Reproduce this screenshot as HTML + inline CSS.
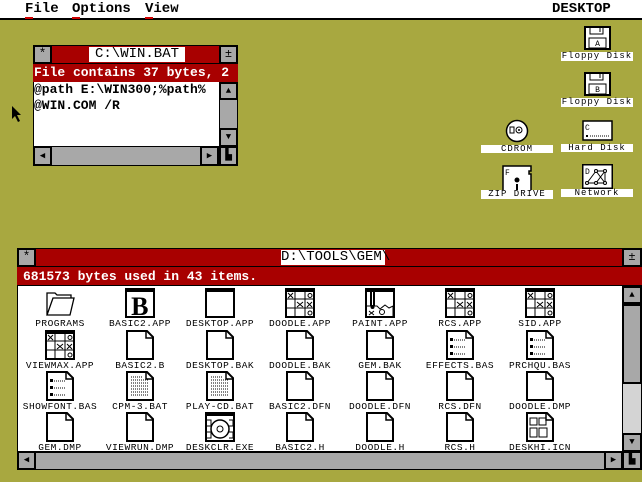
<!DOCTYPE html>
<html><head><meta charset="utf-8"><style>
*{margin:0;padding:0;box-sizing:border-box}
body{width:642px;height:482px;overflow:hidden;position:relative;font-family:"Liberation Mono",monospace;background:#a8a840}
.a{position:absolute}
.menu{left:0;top:0;width:642px;height:20px;background:#fff;border-bottom:2px solid #000;font-size:14px;font-weight:bold;line-height:19px}
.menu span{position:absolute;top:0}
.menu u{text-decoration:none;border-bottom:2px solid #c00}
.gbox{background:#a8a8a8;border:2px solid #000;}
.red{background:#a80000}
.white{background:#fff}
.lbl{background:#fff;font-size:9px;letter-spacing:1px;text-align:center;line-height:9px;color:#000}
.ic{position:absolute;width:80px;text-align:center;font-size:9.5px;letter-spacing:.5px;line-height:10px}
.ic svg{display:block;margin:0 auto 1px}
</style></head><body>
<svg width="0" height="0" style="position:absolute">
<defs>
<symbol id="doc" viewBox="0 0 30 30"><path d="M2 1H22L28 7V29H2Z" fill="#fff" stroke="#000" stroke-width="2"/><path d="M21 1V8H28" fill="none" stroke="#000" stroke-width="1.5"/></symbol>
<symbol id="ldoc" viewBox="0 0 30 30"><use href="#doc"/><g fill="#000"><rect x="5" y="8" width="3" height="3"/><rect x="5" y="15" width="3" height="3"/><rect x="5" y="22" width="3" height="3"/></g><path d="M9 10H20M9 17H20M9 24H20" stroke="#000" stroke-dasharray="1 1"/></symbol>
<symbol id="tdoc" viewBox="0 0 30 30"><use href="#doc"/><path d="M6 6H17M6 9H24M6 12H24M6 15H24M6 18H24M6 21H24M6 24H24" stroke="#000" stroke-dasharray="1 1"/></symbol>
<symbol id="app" viewBox="0 0 30 30"><rect x="1" y="1" width="28" height="28" fill="#fff" stroke="#000" stroke-width="2"/><rect x="1" y="1" width="28" height="3" fill="#000"/></symbol>
<symbol id="grid" viewBox="0 0 30 30"><use href="#app"/><path d="M1 11H29M1 20H29M10 4V29M20 4V29" stroke="#000"/><path d="M3 5L8 10M8 5L3 10M12 14L18 19M18 14L12 19M22 14L27 19M27 14L22 19" stroke="#000"/><circle cx="25" cy="7.5" r="2" fill="none" stroke="#000"/><circle cx="25" cy="25" r="2" fill="none" stroke="#000"/></symbol>
</defs></svg>

<div class="a menu">
<span style="left:25px"><u>F</u>ile</span>
<span style="left:72px"><u>O</u>ptions</span>
<span style="left:145px"><u>V</u>iew</span>
<span style="left:552px">DESKTOP</span>
</div>

<svg class="a" style="left:11px;top:105px" width="12" height="18"><path d="M1 1V14L4 11L7 17L9 16L6 10H10Z" fill="#000"/></svg>

<!-- window 1 -->
<div class="a" style="left:33px;top:45px;width:205px;height:121px;border:1px solid #000;background:#fff"></div>
<div class="a gbox" style="left:33px;top:45px;width:19px;height:19px;font-size:13px;text-align:center;line-height:14px">*</div>
<div class="a red" style="left:52px;top:45px;width:167px;height:19px;border-top:1px solid #000;border-bottom:1px solid #000"></div>
<div class="a white" style="left:89px;top:47px;width:96px;height:15px;font-size:14px;line-height:15px;text-align:center">C:\WIN.BAT</div>
<div class="a gbox" style="left:219px;top:45px;width:19px;height:19px;font-size:12px;text-align:center;line-height:15px">±</div>
<div class="a red" style="left:33px;top:64px;width:205px;height:18px;color:#fff;font-size:13px;font-weight:bold;line-height:18px;padding-left:1px;overflow:hidden;white-space:nowrap">File contains 37 bytes, 2</div>
<div class="a" style="left:34px;top:82px;font-size:13px;font-weight:bold;line-height:16px;white-space:pre">@path E:\WIN300;%path%
@WIN.COM /R</div>
<div class="a" style="left:219px;top:82px;width:19px;height:65px;background:#a8a8a8;border-left:1px solid #000;border-right:1px solid #000"></div>
<div class="a gbox" style="left:219px;top:82px;width:19px;height:18px;font-size:9px;text-align:center;line-height:14px">▲</div>
<div class="a gbox" style="left:219px;top:128px;width:19px;height:19px;font-size:9px;text-align:center;line-height:15px">▼</div>
<div class="a" style="left:33px;top:146px;width:205px;height:20px;background:#a8a8a8;border:1px solid #000"></div>
<div class="a gbox" style="left:33px;top:146px;width:19px;height:20px;font-size:9px;text-align:center;line-height:16px">◀</div>
<div class="a gbox" style="left:200px;top:146px;width:19px;height:20px;font-size:9px;text-align:center;line-height:16px">▶</div>
<div class="a gbox" style="left:219px;top:146px;width:19px;height:20px;font-size:11px;text-align:center;line-height:16px">▙</div>

<!-- desktop icons -->
<svg class="a" style="left:584px;top:26px" width="28" height="24"><rect x="1" y="1" width="25" height="22" fill="#fff" stroke="#000" stroke-width="2"/><path d="M6 1V8H19V1M16 2V6" stroke="#000" fill="none"/><rect x="5" y="12" width="17" height="10" fill="#fff" stroke="#000"/><text x="13.5" y="20" font-size="8" text-anchor="middle" font-family="Liberation Mono">A</text></svg>
<div class="a lbl" style="left:561px;top:52px;width:72px;height:9px">Floppy Disk</div>
<svg class="a" style="left:584px;top:72px" width="28" height="24"><rect x="1" y="1" width="25" height="22" fill="#fff" stroke="#000" stroke-width="2"/><path d="M6 1V8H19V1M16 2V6" stroke="#000" fill="none"/><rect x="5" y="12" width="17" height="10" fill="#fff" stroke="#000"/><text x="13.5" y="20" font-size="8" text-anchor="middle" font-family="Liberation Mono">B</text></svg>
<div class="a lbl" style="left:561px;top:98px;width:72px;height:9px">Floppy Disk</div>
<svg class="a" style="left:505px;top:119px" width="24" height="24"><circle cx="12" cy="12" r="10.5" fill="#fff" stroke="#000" stroke-width="1.5"/><circle cx="14" cy="11" r="3" fill="none" stroke="#000"/><circle cx="14" cy="11" r="1" fill="#000"/><rect x="5" y="8" width="4" height="6" fill="none" stroke="#000"/></svg>
<div class="a lbl" style="left:481px;top:145px;width:72px;height:8px">CDROM</div>
<svg class="a" style="left:582px;top:120px" width="32" height="22"><rect x="1" y="1" width="29" height="19" fill="#fff" stroke="#000" stroke-width="1.5"/><text x="3" y="10" font-size="8" font-family="Liberation Mono">C</text><rect x="4" y="15" width="2" height="2"/><path d="M8 16H27" stroke="#000" stroke-dasharray="1 1"/></svg>
<div class="a lbl" style="left:561px;top:144px;width:72px;height:8px">Hard Disk</div>
<svg class="a" style="left:502px;top:165px" width="30" height="29"><path d="M1 1H29V6H27V9H29V28H1Z" fill="#fff" stroke="#000" stroke-width="1.5"/><text x="3" y="10" font-size="8" font-family="Liberation Mono">F</text><circle cx="15" cy="15" r="2.5"/><rect x="14" y="19" width="2" height="6"/></svg>
<div class="a lbl" style="left:481px;top:190px;width:72px;height:9px">ZIP DRIVE</div>
<svg class="a" style="left:581px;top:163px" width="33" height="27"><rect x="1" y="1" width="31" height="25" fill="#000"/><rect x="2" y="2" width="29" height="23" fill="#fff" stroke="#000"/><g fill="#fff" stroke="#000"><path d="M6 20L15 8M15 8H24M15 8L24 20M24 8L15 20M6 20H24M24 8V20" fill="none"/><circle cx="15" cy="8" r="1.5"/><circle cx="24" cy="8" r="1.5"/><circle cx="6" cy="20" r="1.5"/><circle cx="15" cy="20" r="1.5"/><circle cx="24" cy="20" r="1.5"/></g><text x="4" y="11" font-size="8" font-family="Liberation Mono">D</text></svg>
<div class="a lbl" style="left:561px;top:189px;width:72px;height:8px">Network</div>

<!-- window 2 -->
<div class="a" style="left:17px;top:248px;width:625px;height:222px;border:1px solid #000;background:#fff"></div>
<div class="a gbox" style="left:17px;top:248px;width:19px;height:19px;font-size:13px;text-align:center;line-height:14px">*</div>
<div class="a red" style="left:36px;top:248px;width:587px;height:19px;border-top:1px solid #000;border-bottom:1px solid #000"></div>
<div class="a white" style="left:281px;top:250px;width:104px;height:15px;font-size:14px;line-height:15px;text-align:center">D:\TOOLS\GEM\</div>
<div class="a gbox" style="left:622px;top:248px;width:20px;height:19px;font-size:12px;text-align:center;line-height:15px">±</div>
<div class="a red" style="left:17px;top:267px;width:625px;height:19px;color:#fff;font-size:13px;font-weight:bold;line-height:19px;padding-left:6px;border-bottom:1px solid #000">681573 bytes used in 43 items.</div>

<div class="a" style="left:18px;top:286px;width:604px;height:165px;overflow:hidden">
<div class="ic" style="left:2px;top:2px"><svg width="30" height="30" viewBox="0 0 30 30"><path d="M2 8V5H10L12 7H26V10H8L2 27ZM2 27H25L29 10H8Z" fill="#fff" stroke="#000" stroke-width="1.3"/></svg>PROGRAMS</div>
<div class="ic" style="left:82px;top:2px"><svg width="30" height="30"><use href="#app"/><text x="15" y="27" font-size="26" font-weight="bold" text-anchor="middle" font-family="Liberation Serif">B</text></svg>BASIC2.APP</div>
<div class="ic" style="left:162px;top:2px"><svg width="30" height="30"><use href="#app"/></svg>DESKTOP.APP</div>
<div class="ic" style="left:242px;top:2px"><svg width="30" height="30"><use href="#grid"/></svg>DOODLE.APP</div>
<div class="ic" style="left:322px;top:2px"><svg width="30" height="30"><use href="#app"/><path d="M6 4V18M9 4V18" stroke="#000" stroke-width="2"/><circle cx="7.5" cy="19" r="2"/><path d="M1 18H12L15 21L20 17L24 20L28 18V29" fill="none" stroke="#000"/><circle cx="17" cy="24" r="2.5" fill="none" stroke="#000"/><path d="M4 23L9 27M9 23L4 27" stroke="#000"/></svg>PAINT.APP</div>
<div class="ic" style="left:402px;top:2px"><svg width="30" height="30"><use href="#grid"/></svg>RCS.APP</div>
<div class="ic" style="left:482px;top:2px"><svg width="30" height="30"><use href="#grid"/></svg>SID.APP</div>
<div class="ic" style="left:2px;top:44px"><svg width="30" height="30"><use href="#grid"/></svg>VIEWMAX.APP</div>
<div class="ic" style="left:82px;top:44px"><svg width="30" height="30"><use href="#doc"/></svg>BASIC2.B</div>
<div class="ic" style="left:162px;top:44px"><svg width="30" height="30"><use href="#doc"/></svg>DESKTOP.BAK</div>
<div class="ic" style="left:242px;top:44px"><svg width="30" height="30"><use href="#doc"/></svg>DOODLE.BAK</div>
<div class="ic" style="left:322px;top:44px"><svg width="30" height="30"><use href="#doc"/></svg>GEM.BAK</div>
<div class="ic" style="left:402px;top:44px"><svg width="30" height="30"><use href="#ldoc"/></svg>EFFECTS.BAS</div>
<div class="ic" style="left:482px;top:44px"><svg width="30" height="30"><use href="#ldoc"/></svg>PRCHQU.BAS</div>
<div class="ic" style="left:2px;top:85px"><svg width="30" height="30"><use href="#ldoc"/></svg>SHOWFONT.BAS</div>
<div class="ic" style="left:82px;top:85px"><svg width="30" height="30"><use href="#tdoc"/></svg>CPM-3.BAT</div>
<div class="ic" style="left:162px;top:85px"><svg width="30" height="30"><use href="#tdoc"/></svg>PLAY-CD.BAT</div>
<div class="ic" style="left:242px;top:85px"><svg width="30" height="30"><use href="#doc"/></svg>BASIC2.DFN</div>
<div class="ic" style="left:322px;top:85px"><svg width="30" height="30"><use href="#doc"/></svg>DOODLE.DFN</div>
<div class="ic" style="left:402px;top:85px"><svg width="30" height="30"><use href="#doc"/></svg>RCS.DFN</div>
<div class="ic" style="left:482px;top:85px"><svg width="30" height="30"><use href="#doc"/></svg>DOODLE.DMP</div>
<div class="ic" style="left:2px;top:126px"><svg width="30" height="30"><use href="#doc"/></svg>GEM.DMP</div>
<div class="ic" style="left:82px;top:126px"><svg width="30" height="30"><use href="#doc"/></svg>VIEWRUN.DMP</div>
<div class="ic" style="left:162px;top:126px"><svg width="30" height="30"><use href="#app"/><circle cx="15" cy="17" r="9" fill="none" stroke="#000" stroke-width="1.5"/><circle cx="15" cy="17" r="3" fill="none" stroke="#000"/><path d="M2 8H6V14H2M24 8H28V14H24M2 20H6V26H2M24 20H28V26H24" fill="none" stroke="#000"/></svg>DESKCLR.EXE</div>
<div class="ic" style="left:242px;top:126px"><svg width="30" height="30"><use href="#doc"/></svg>BASIC2.H</div>
<div class="ic" style="left:322px;top:126px"><svg width="30" height="30"><use href="#doc"/></svg>DOODLE.H</div>
<div class="ic" style="left:402px;top:126px"><svg width="30" height="30"><use href="#doc"/></svg>RCS.H</div>
<div class="ic" style="left:482px;top:126px"><svg width="30" height="30"><use href="#doc"/><rect x="5" y="6" width="7" height="7" fill="none" stroke="#000"/><rect x="14" y="6" width="7" height="7" fill="none" stroke="#000"/><rect x="5" y="16" width="7" height="9" fill="none" stroke="#000"/><rect x="14" y="16" width="8" height="9" fill="none" stroke="#000"/></svg>DESKHI.ICN</div>
</div>

<div class="a" style="left:622px;top:286px;width:20px;height:166px;background:#d4d4d4;border-left:1px solid #000;border-right:1px solid #000"></div>
<div class="a gbox" style="left:622px;top:286px;width:20px;height:18px;font-size:9px;text-align:center;line-height:14px">▲</div>
<div class="a gbox" style="left:622px;top:304px;width:20px;height:80px"></div>
<div class="a gbox" style="left:622px;top:433px;width:20px;height:19px;font-size:9px;text-align:center;line-height:15px">▼</div>
<div class="a" style="left:17px;top:451px;width:625px;height:19px;background:#a8a8a8;border:1px solid #000;border-top:2px solid #000"></div>
<div class="a gbox" style="left:17px;top:451px;width:19px;height:19px;font-size:9px;text-align:center;line-height:15px">◀</div>
<div class="a gbox" style="left:604px;top:451px;width:19px;height:19px;font-size:9px;text-align:center;line-height:15px">▶</div>
<div class="a gbox" style="left:622px;top:451px;width:20px;height:19px;font-size:11px;text-align:center;line-height:15px">▙</div>
</body></html>
